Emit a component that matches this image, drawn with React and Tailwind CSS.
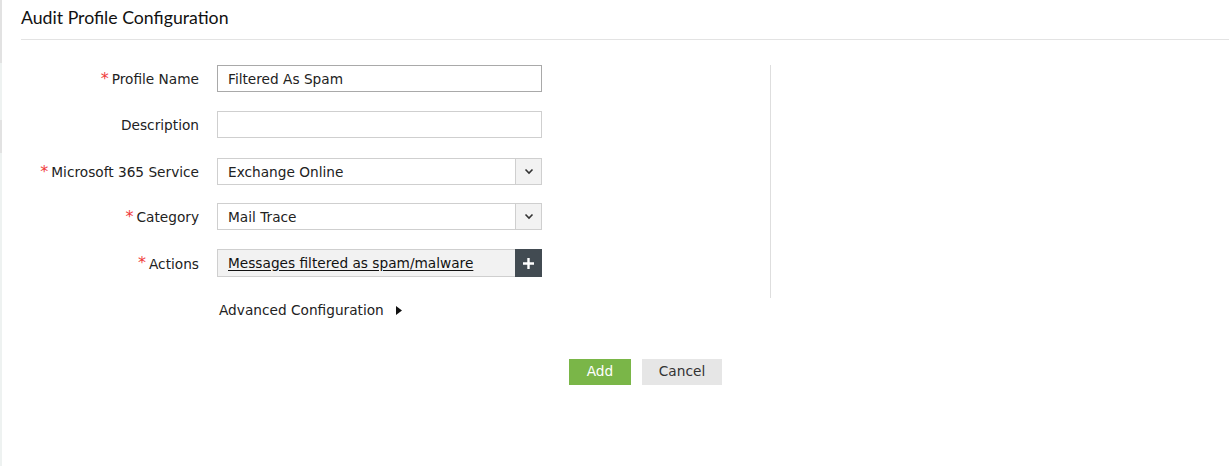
import React from "react";

const font = { fontFamily: '"DejaVu Sans", Verdana, sans-serif' };

function Label({ required, children }) {
  return (
    <div className="w-[197px] shrink-0 flex justify-end items-center pt-[2px] text-[13.7px] text-[#222]">
      {required && <span className="text-[#f03c3c] text-[16px] mr-[3px] relative top-[-1px]">*</span>}
      <span>{children}</span>
    </div>
  );
}

function Chevron() {
  return (
    <svg width="10" height="7" viewBox="0 0 10 7">
      <path d="M1.5 1.5 L5 5 L8.5 1.5" stroke="#333" strokeWidth="1.6" fill="none" />
    </svg>
  );
}

export default function App() {
  return (
    <div className="w-[1229px] h-[466px] bg-white flex" style={font}>
      <div className="w-[2px] shrink-0 flex flex-col">
        <div className="h-[63px] bg-[#e2e2e2]" />
        <div className="h-[57px] bg-[#eef2f1]" />
        <div className="h-[33px] bg-[#e2e2e2]" />
        <div className="flex-1 bg-[#eef2f1]" />
      </div>
      <div className="flex-1 flex flex-col">
        <div className="ml-[19px] h-[40px] border-b border-[#e3e3e3] flex items-center">
          <h1 className="text-[17.7px] text-[#111] pb-[2px]" style={{ fontFamily: "Lato, sans-serif" }}>
            Audit Profile Configuration
          </h1>
        </div>
        <div className="flex mt-[25px]">
          <div className="flex flex-col w-[540px]">
            <div className="flex gap-[18px] h-[27px]">
              <Label required>Profile Name</Label>
              <div className="w-[325px] h-[27px] border border-[#a9a9a9] flex items-center pl-[10px] pt-[2px] text-[13.7px] text-[#222]">
                Filtered As Spam
              </div>
            </div>
            <div className="flex gap-[18px] h-[27px] mt-[19px]">
              <Label>Description</Label>
              <div className="w-[325px] h-[27px] border border-[#cfcfcf]" />
            </div>
            <div className="flex gap-[18px] h-[27px] mt-[20px]">
              <Label required>Microsoft 365 Service</Label>
              <div className="w-[325px] h-[27px] border border-[#cfcfcf] flex">
                <div className="flex-1 flex items-center pl-[10px] pt-[1px] text-[13.7px] text-[#222]">Exchange Online</div>
                <div className="w-[26px] bg-[#f2f2f2] border-l border-[#cfcfcf] flex items-center justify-center">
                  <Chevron />
                </div>
              </div>
            </div>
            <div className="flex gap-[18px] h-[27px] mt-[18px]">
              <Label required>Category</Label>
              <div className="w-[325px] h-[27px] border border-[#cfcfcf] flex">
                <div className="flex-1 flex items-center pl-[10px] pt-[1px] text-[13.7px] text-[#222]">Mail Trace</div>
                <div className="w-[26px] bg-[#f2f2f2] border-l border-[#cfcfcf] flex items-center justify-center">
                  <Chevron />
                </div>
              </div>
            </div>
            <div className="flex gap-[18px] h-[28px] mt-[19px]">
              <Label required>Actions</Label>
              <div className="w-[325px] h-[28px] border border-[#cfcfcf] bg-[#f2f2f2] flex">
                <div className="flex-1 flex items-center pl-[10px] text-[13.7px] text-[#111] underline underline-offset-2">
                  Messages filtered as spam/malware
                </div>
                <div className="w-[27px] -my-px -mr-px bg-[#424b52] flex items-center justify-center">
                  <svg width="13" height="13" viewBox="0 0 13 13">
                    <path d="M6.5 1 V12 M1 6.5 H12" stroke="#fff" strokeWidth="2.4" />
                  </svg>
                </div>
              </div>
            </div>
            <div className="flex items-center ml-[217px] mt-[23px] text-[13.7px] text-[#222]">
              <span>Advanced Configuration</span>
              <svg className="ml-[12px]" width="6" height="9" viewBox="0 0 6 9">
                <path d="M0 0 L6 4.5 L0 9 Z" fill="#111" />
              </svg>
            </div>
          </div>
          <div className="ml-[228px] w-px h-[233px] bg-[#dedede]" />
        </div>
        <div className="flex gap-[11px] ml-[567px] mt-[38px]">
          <button className="w-[62px] h-[26px] bg-[#7ab648] text-white text-[13.7px] flex items-center justify-center">
            Add
          </button>
          <button className="w-[80px] h-[26px] bg-[#e6e6e6] text-[#333] text-[13.7px] flex items-center justify-center">
            Cancel
          </button>
        </div>
      </div>
    </div>
  );
}
